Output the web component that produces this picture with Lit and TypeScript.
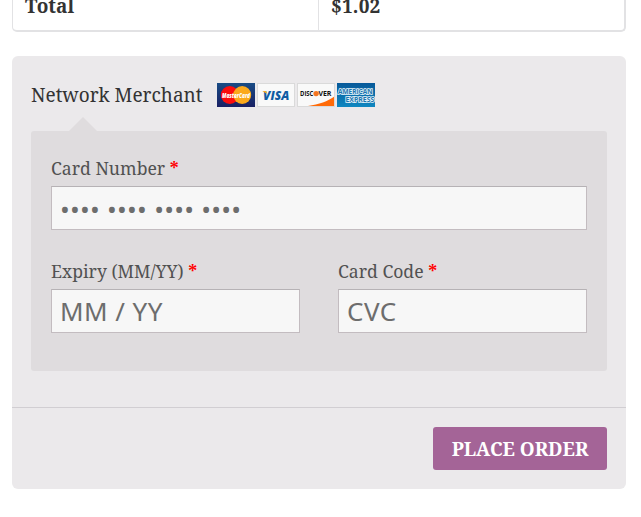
import { LitElement, html, css, svg } from "lit";
import { customElement } from "lit/decorators.js";

@customElement("card-logo-strip")
class CardLogoStrip extends LitElement {
  static styles = css`
    :host { display: flex; gap: 2px; }
    svg { display: block; width: 38px; height: 24px; }
    text { font-family: "Open Sans", "Liberation Sans", sans-serif; font-weight: 800; font-style: italic; }
    .upright { font-style: normal; }
    .medium { font-weight: 700; }
    .outlined { font-weight: 700; paint-order: stroke; stroke: #e6f3fa; stroke-width: 1.5px; fill: #1a76b0; }
  `;

  render() {
    const sheet = svg`<rect width="38" height="24" fill="#dadada"/><rect x="1" y="1" width="36" height="22" fill="#f9f9f9"/>`;
    return html`
      <svg viewBox="0 0 38 24" aria-label="MasterCard">
        <defs><linearGradient id="mc" x2="0" y2="1"><stop stop-color="#184b84"/><stop offset="1" stop-color="#192064"/></linearGradient></defs>
        <rect width="38" height="24" fill="url(#mc)"/>
        <circle cx="12.8" cy="12" r="9" fill="#fb0d0d"/>
        <circle cx="25.2" cy="12" r="9" fill="#fba91c"/>
        <text x="5" y="14.6" font-size="6.4" textLength="28" lengthAdjust="spacingAndGlyphs" fill="#fff">MasterCard</text>
      </svg>
      <svg viewBox="0 0 38 24" aria-label="Visa">
        ${sheet}
        <text x="6" y="16.6" font-size="11.8" textLength="26.3" lengthAdjust="spacingAndGlyphs" fill="#105ca3">VISA</text>
        <path d="M5.2 7.9h3.6l1.2 1.4-.4 1.4-1.4-.9z" fill="#f3ad26"/>
      </svg>
      <svg viewBox="0 0 38 24" aria-label="Discover">
        ${sheet}
        <path d="M37 13.8V23H11C22 21.4 31 18.3 37 13.8" fill="#ff6a08"/>
        <text class="upright medium" x="3" y="13.2" font-size="7.4" textLength="13.4" lengthAdjust="spacingAndGlyphs" fill="#111">DISC</text>
        <circle cx="19.1" cy="10.6" r="2.7" fill="#f47521"/>
        <text class="upright medium" x="21.4" y="13.2" font-size="7.4" textLength="13" lengthAdjust="spacingAndGlyphs" fill="#111">VER</text>
      </svg>
      <svg viewBox="0 0 38 24" aria-label="American Express">
        <defs><linearGradient id="ax" x2="0" y2="1"><stop stop-color="#075999"/><stop offset="1" stop-color="#0f87c0"/></linearGradient></defs>
        <rect width="38" height="24" fill="url(#ax)"/>
        <text class="upright outlined" x="1" y="11.3" font-size="6.8" textLength="34.5" lengthAdjust="spacingAndGlyphs">AMERICAN</text>
        <text class="upright outlined" x="8.5" y="19.1" font-size="6.8" textLength="28.8" lengthAdjust="spacingAndGlyphs">EXPRESS</text>
      </svg>`;
  }
}

@customElement("app-root")
class AppRoot extends LitElement {
  static styles = css`
    * { box-sizing: border-box; }
    :host { display: block; height: 517px; overflow: hidden; padding: 0 15px 0 12px; background: #fff; color: #333;
      font-family: "Noto Serif", "DejaVu Serif Condensed", "DejaVu Serif", serif; }
    .totals { display: grid; grid-template-columns: 305px 1fr; height: 32px; overflow: hidden;
      border: solid #e2e2e4; border-width: 0 2px 2px 1px; border-radius: 0 0 5px 5px; }
    .totals div { padding-left: 12px; font-size: 19px; font-weight: 700; line-height: 24px; height: 30px; }
    .totals span { display: block; margin-top: -6px; }
    .totals .amount { border-left: 1px solid #e2e2e4; letter-spacing: .2px; }
    .payment { margin-top: 24px; height: 433px; border-radius: 6px; background: #ebe9eb; }
    .method { height: 352px; padding: 26px 19px 0; border-bottom: 1px solid #d1ced2; }
    .heading { display: flex; align-items: center; height: 26px; font-size: 20px; line-height: 24px; }
    .heading .name { flex: none; width: 186px; white-space: nowrap; }
    .narrow { display: inline-block; transform: scaleX(.978); transform-origin: 0 50%; }
    .heading .narrow { transform: scaleX(.949); }
    .fields { position: relative; margin-top: 23px; height: 240px; padding: 24px 20px 0; background: #dfdcde; border-radius: 3px; color: #515151; }
    .fields::before { content: ""; position: absolute; left: 38px; top: -14px; border: solid transparent; border-width: 0 14px 14px; border-bottom-color: #dfdcde; }
    .pair { display: grid; grid-template-columns: 249px 249px; gap: 38px; margin-top: 28px; }
    label { display: block; height: 31px; line-height: 26px; font-size: 18px; white-space: nowrap; }
    .req { display: inline-block; color: #f00; font-weight: 700; }
    input { display: block; width: 100%; height: 44px; margin: 0; padding: 2px 8px 0; border: 1px solid #c3bcc0; border-top-color: #b6b2b5; border-radius: 0;
      background: #f7f7f7; color: #43454b; font: 26px "Noto Sans", "Open Sans", sans-serif; letter-spacing: .24px; outline: none; }
    .pair input { padding-top: 0; letter-spacing: .45px; }
    input::placeholder { color: #6d6d6d; opacity: 1; }
    .actions { display: flex; justify-content: flex-end; padding: 19px 19px 0; }
    button { width: 174px; height: 43px; padding: 0; border: 0; border-radius: 3px; background: #a46497; color: #fff;
      font: 700 18.9px "Noto Serif", "DejaVu Serif Condensed", "DejaVu Serif", serif; white-space: nowrap; }
  `;

  render() {
    return html`
      <div class="totals"><div><span>Total</span></div><div class="amount"><span>$1.02</span></div></div>
      <section class="payment">
        <div class="method">
          <div class="heading"><div class="name"><span class="narrow">Network Merchant</span></div><card-logo-strip></card-logo-strip></div>
          <div class="fields">
            <label for="number"><span class="narrow">Card Number <span class="req">*</span></span></label>
            <input id="number" placeholder="•••• •••• •••• ••••">
            <div class="pair">
              <div><label for="expiry"><span class="narrow">Expiry (MM/YY) <span class="req">*</span></span></label><input id="expiry" placeholder="MM / YY"></div>
              <div><label for="code"><span class="narrow">Card Code <span class="req">*</span></span></label><input id="code" placeholder="CVC"></div>
            </div>
          </div>
        </div>
        <div class="actions"><button type="button">PLACE ORDER</button></div>
      </section>`;
  }
}
